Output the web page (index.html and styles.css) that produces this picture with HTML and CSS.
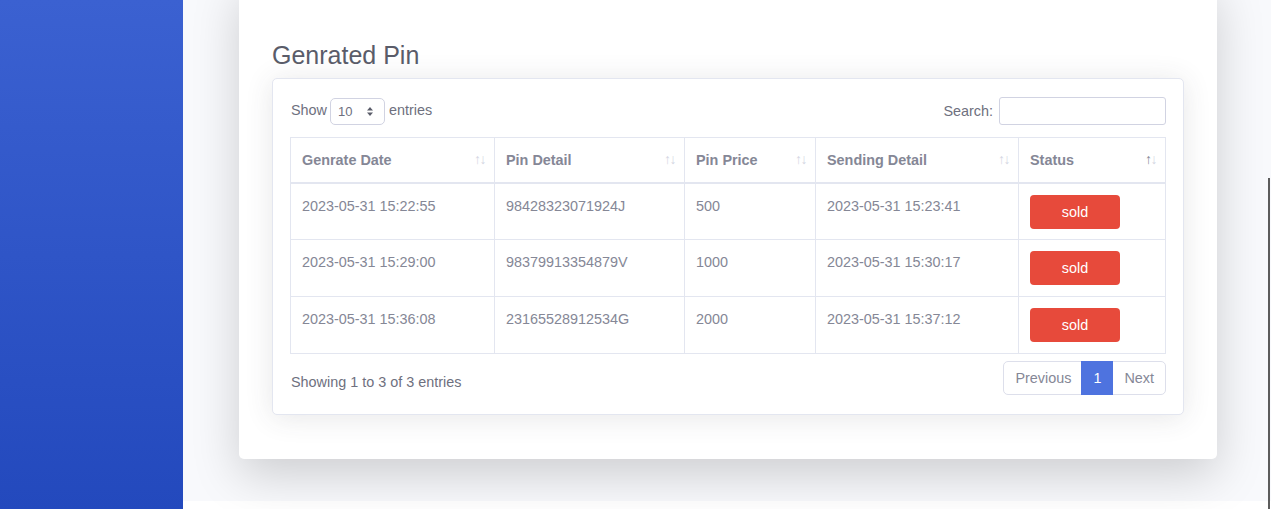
FILE: index.html
```html
<!DOCTYPE html>
<html lang="en">
<head>
<meta charset="utf-8">
<title>Genrated Pin</title>
<link rel="stylesheet" href="styles.css">
</head>
<body>
<div class="wrapper">
  <aside class="sidebar"></aside>
  <main class="content">
    <section class="panel">
      <h2 class="title">Genrated Pin</h2>
      <div class="box">
        <div class="controls">
          <label class="length">Show
            <span class="select">10
              <svg class="caret" width="8" height="11" viewBox="0 0 8 11"><path d="M4 1 L7 4.5 H1 Z M4 10 L7 6.5 H1 Z" fill="#5a5c69"/></svg>
            </span>
            entries</label>
          <label class="search">Search: <span class="input"></span></label>
        </div>
        <table class="grid">
          <colgroup>
            <col class="c1"><col class="c2"><col class="c3"><col class="c4"><col class="c5">
          </colgroup>
          <thead>
            <tr>
              <th><span>Genrate Date</span><i class="sort"><b>↑</b><b>↓</b></i></th>
              <th><span>Pin Detail</span><i class="sort"><b>↑</b><b>↓</b></i></th>
              <th><span>Pin Price</span><i class="sort"><b>↑</b><b>↓</b></i></th>
              <th><span>Sending Detail</span><i class="sort"><b>↑</b><b>↓</b></i></th>
              <th><span>Status</span><i class="sort asc"><b>↑</b><b>↓</b></i></th>
            </tr>
          </thead>
          <tbody>
            <tr>
              <td>2023-05-31 15:22:55</td>
              <td>98428323071924J</td>
              <td>500</td>
              <td>2023-05-31 15:23:41</td>
              <td><span class="sold">sold</span></td>
            </tr>
            <tr>
              <td>2023-05-31 15:29:00</td>
              <td>98379913354879V</td>
              <td>1000</td>
              <td>2023-05-31 15:30:17</td>
              <td><span class="sold">sold</span></td>
            </tr>
            <tr>
              <td>2023-05-31 15:36:08</td>
              <td>23165528912534G</td>
              <td>2000</td>
              <td>2023-05-31 15:37:12</td>
              <td><span class="sold">sold</span></td>
            </tr>
          </tbody>
        </table>
        <div class="footer">
          <div class="info">Showing 1 to 3 of 3 entries</div>
          <ul class="pager">
            <li class="pg">Previous</li>
            <li class="pg active">1</li>
            <li class="pg">Next</li>
          </ul>
        </div>
      </div>
    </section>
  </main>
</div>
<div class="scroll-thumb"></div>
</body>
</html>
```

FILE: styles.css
```css
* { box-sizing: border-box; }
html, body { margin: 0; padding: 0; }
body {
  background: #ffffff;
  font-family: "Liberation Sans", Arial, sans-serif;
  font-size: 14.4px;
  color: #858796;
  height: 509px;
  overflow: hidden;
}
.wrapper {
  display: flex;
  height: 509px;
  align-items: flex-start;
}
.sidebar {
  width: 183px;
  flex: 0 0 183px;
  height: 509px;
  background: linear-gradient(180deg, #3b61d1 0%, #2349bd 100%);
}
.content {
  flex: 1;
  height: 501px;
  background: #f8f9fc;
  padding: 0 54px 0 56px;
}
.panel {
  margin-top: -20px;
  background: #fff;
  border-radius: 5px;
  box-shadow: 0 1rem 3rem rgba(0, 0, 0, .175);
  padding: 60px 33px 44px 33px;
}
.title {
  margin: 0 0 8px 0;
  font-size: 25px;
  line-height: 30px;
  font-weight: 400;
  color: #5a5c69;
}
.box {
  background: #fff;
  border: 1px solid #e3e6f0;
  border-radius: 5px;
  box-shadow: 0 .15rem 1.75rem 0 rgba(58, 59, 69, .12);
  padding: 18px 17px 19px 17px;
}
.controls {
  display: flex;
  justify-content: space-between;
  align-items: center;
  height: 28px;
  margin-bottom: 12px;
  color: #6e707e;
  font-size: 14.4px;
}
.length, .search {
  display: flex;
  align-items: center;
}
.length { padding-left: 1px; margin-top: -2px; gap: 3px; }
.select {
  display: inline-flex;
  align-items: center;
  justify-content: space-between;
  width: 55px;
  height: 27px;
  border: 1px solid #d1d3e2;
  border-radius: 5px;
  padding: 0 10px 0 7px;
  font-size: 13px;
  color: #6e707e;
  margin: 2px 1px 0 0;
}
.search { gap: 6px; }
.input {
  display: inline-block;
  width: 167px;
  height: 28px;
  border: 1px solid #d1d3e2;
  border-radius: 3px;
}
.grid {
  width: 100%;
  border-collapse: collapse;
  table-layout: fixed;
}
.c1 { width: 204px; }
.c2 { width: 190px; }
.c3 { width: 131px; }
.c4 { width: 203px; }
.c5 { width: auto; }
.grid th, .grid td {
  border: 1px solid #e3e6f0;
  text-align: left;
  vertical-align: top;
  line-height: 22px;
}
.grid th {
  position: relative;
  font-weight: 700;
  padding: 11px 11px 11px 11px;
  border-bottom: 2px solid #e3e6f0;
  color: #858796;
}
.grid td {
  padding: 11px 11px 10px 11px;
  height: 56.7px;
}
.sort {
  position: absolute;
  right: 9px;
  top: 13px;
  font-style: normal;
  font-size: 14px;
  line-height: 16px;
  letter-spacing: -1.5px;
  color: #d5d7e3;
  font-weight: 400;
}
.sort b { font-weight: 400; }
.sort.asc b:first-child { color: #858796; }
.sold {
  display: flex;
  align-items: center;
  justify-content: center;
  width: 90px;
  height: 34px;
  background: #e74a3b;
  border-radius: 4px;
  color: #fff;
}
.footer {
  display: flex;
  justify-content: space-between;
  align-items: flex-start;
  margin-top: 7px;
}
.info {
  padding: 13px 0 0 1px;
  color: #6e707e;
}
.pager {
  display: flex;
  list-style: none;
  margin: 0;
  padding: 0;
}
.pg {
  height: 34px;
  line-height: 32px;
  padding: 0 11px;
  border: 1px solid #dddfeb;
  margin-left: -1px;
  color: #858796;
}
.pg:first-child { border-radius: 5px 0 0 5px; padding-left: 11px; padding-right: 10px; }
.pg:last-child { border-radius: 0 5px 5px 0; padding-right: 11px; }
.pg.active {
  background: #4e73df;
  border-color: #4e73df;
  color: #fff;
  position: relative;
}
.scroll-thumb {
  position: absolute;
  right: 1px;
  top: 178px;
  width: 2px;
  height: 331px;
  background: #5c5c5c;
}
```
